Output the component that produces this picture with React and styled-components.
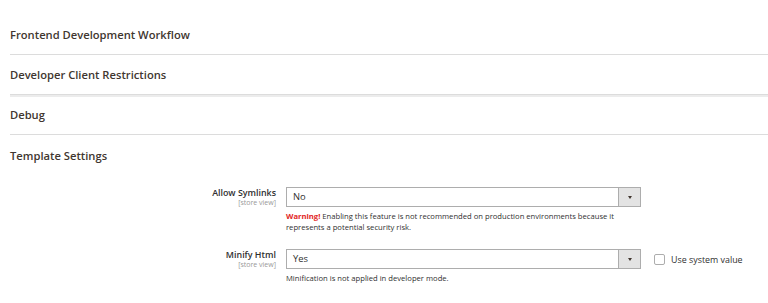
import React from "react";
import styled, { createGlobalStyle } from "styled-components";

const Global = createGlobalStyle`
  html, body { margin: 0; padding: 0; background: #fff; }
  body { font-family: "Open Sans", "Noto Sans", sans-serif; color: #303030; }
`;

const Page = styled.div`
  padding: 15px 0 0 10px;
  width: 768px;
  box-sizing: border-box;
`;

const Section = styled.div`
  height: 40px;
  box-sizing: border-box;
  display: flex;
  align-items: center;
  border-bottom: ${(p) => (p.$last ? "none" : "1px solid #dcdcdc")};
  box-shadow: ${(p) => (p.$double ? "0 2px 0 #ececec" : "none")};
`;

const Title = styled.h3`
  margin: 0;
  font-size: 11.2px;
  font-weight: 600;
  color: #41362f;
`;

const Fieldset = styled.div`
  padding-top: 12px;
  display: flex;
  flex-direction: column;
  gap: 16px;
`;

const Row = styled.div`
  display: grid;
  grid-template-columns: 266px 355px 1fr;
  column-gap: 10px;
  align-items: start;
`;

const LabelCell = styled.div`
  text-align: right;
`;

const LabelText = styled.div`
  font-size: 8.9px;
  font-weight: 600;
  color: #303030;
  line-height: 11px;
`;

const Scope = styled.div`
  font-size: 7px;
  color: #999;
  line-height: 9px;
`;

const Select = styled.div`
  height: 20px;
  border: 1px solid #adadad;
  box-sizing: border-box;
  display: flex;
  align-items: stretch;
  background: #fff;
`;

const SelectValue = styled.div`
  flex: 1;
  padding-left: 6px;
  font-size: 9.4px;
  line-height: 18px;
  color: #303030;
`;

const Arrow = styled.div`
  width: 21px;
  background: #e3e3e3;
  border-left: 1px solid #adadad;
  display: flex;
  align-items: center;
  justify-content: center;
  &::after {
    content: "";
    width: 0;
    height: 0;
    border-left: 2.5px solid transparent;
    border-right: 2.5px solid transparent;
    border-top: 3px solid #41362f;
  }
`;

const Note = styled.div`
  margin-top: 4px;
  font-size: 7.65px;
  line-height: 11px;
  color: #303030;
`;

const Warn = styled.strong`
  color: #e22626;
  font-weight: 700;
`;

const Side = styled.label`
  display: flex;
  align-items: center;
  gap: 6px;
  height: 20px;
  padding-left: 3px;
  font-size: 8.9px;
  color: #303030;
`;

const Box = styled.span`
  width: 11px;
  height: 11px;
  box-sizing: border-box;
  border: 1px solid #adadad;
  border-radius: 2px;
  background: #fff;
`;

const Field = ({ label, value, note, side }) => (
  <Row>
    <LabelCell>
      <LabelText>{label}</LabelText>
      <Scope>[store view]</Scope>
    </LabelCell>
    <div>
      <Select>
        <SelectValue>{value}</SelectValue>
        <Arrow />
      </Select>
      <Note>{note}</Note>
    </div>
    <div>
      {side && (
        <Side>
          <Box />
          Use system value
        </Side>
      )}
    </div>
  </Row>
);

export default function App() {
  return (
    <>
      <Global />
      <Page>
        <Section><Title>Frontend Development Workflow</Title></Section>
        <Section $double><Title>Developer Client Restrictions</Title></Section>
        <Section><Title>Debug</Title></Section>
        <Section $last><Title>Template Settings</Title></Section>
        <Fieldset>
          <Field
            label="Allow Symlinks"
            value="No"
            note={
              <>
                <Warn>Warning!</Warn> Enabling this feature is not recommended on production environments because it
                <br />
                represents a potential security risk.
              </>
            }
          />
          <Field
            label="Minify Html"
            value="Yes"
            side
            note="Minification is not applied in developer mode."
          />
        </Fieldset>
      </Page>
    </>
  );
}
